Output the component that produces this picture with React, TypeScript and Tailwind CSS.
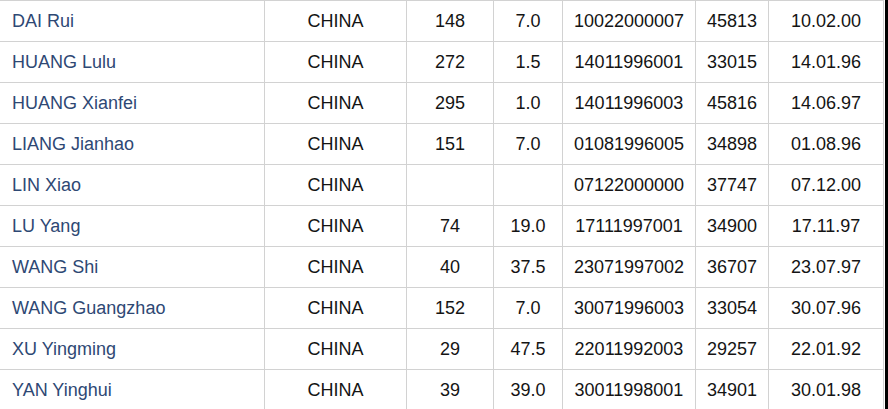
import React from "react";

const rows = [
  ["DAI Rui", "CHINA", "148", "7.0", "10022000007", "45813", "10.02.00"],
  ["HUANG Lulu", "CHINA", "272", "1.5", "14011996001", "33015", "14.01.96"],
  ["HUANG Xianfei", "CHINA", "295", "1.0", "14011996003", "45816", "14.06.97"],
  ["LIANG Jianhao", "CHINA", "151", "7.0", "01081996005", "34898", "01.08.96"],
  ["LIN Xiao", "CHINA", "", "", "07122000000", "37747", "07.12.00"],
  ["LU Yang", "CHINA", "74", "19.0", "17111997001", "34900", "17.11.97"],
  ["WANG Shi", "CHINA", "40", "37.5", "23071997002", "36707", "23.07.97"],
  ["WANG Guangzhao", "CHINA", "152", "7.0", "30071996003", "33054", "30.07.96"],
  ["XU Yingming", "CHINA", "29", "47.5", "22011992003", "29257", "22.01.92"],
  ["YAN Yinghui", "CHINA", "39", "39.0", "30011998001", "34901", "30.01.98"],
];

export default function App() {
  return (
    <div className="flex w-[888px] h-[409px] overflow-hidden bg-white" style={{ fontFamily: '"Liberation Sans", Arial, sans-serif' }}>
      <div className="grid grid-cols-[265px_142px_87px_69px_133px_73px_115px] auto-rows-[41px] border-t border-[#d2d2d2] content-start text-[18px] text-[#141414]">
        {rows.map((r, i) => (
          <React.Fragment key={i}>
            <div className="flex items-center pl-3 border-r border-b border-[#d2d2d2] text-[#2e4874]">{r[0]}</div>
            {r.slice(1).map((c, j) => (
              <div key={j} className="flex items-center justify-center border-r border-b border-[#d2d2d2]">{c}</div>
            ))}
          </React.Fragment>
        ))}
      </div>
      <div className="flex-1 flex">
        <div className="w-px bg-white" />
        <div className="flex-1 bg-black" />
      </div>
    </div>
  );
}
